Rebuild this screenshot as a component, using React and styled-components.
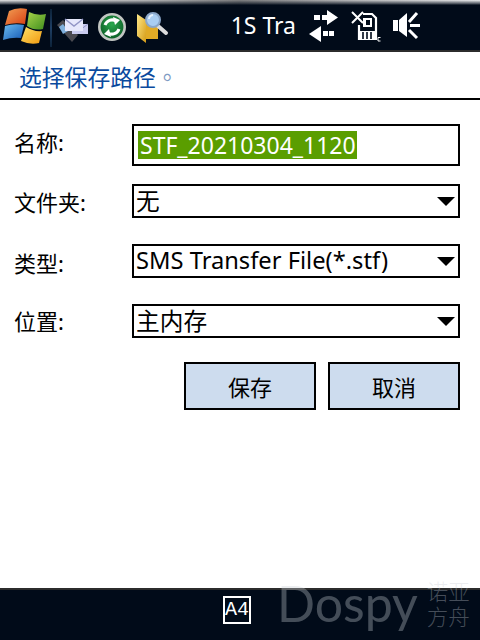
import React from "react";
import styled, { createGlobalStyle } from "styled-components";

const Global = createGlobalStyle`
  html, body { margin: 0; padding: 0; background: #fff; }
  #root { width: 480px; height: 640px; overflow: hidden; }
`;

const Page = styled.div`
  position: relative;
  width: 480px;
  height: 640px;
  display: flex;
  flex-direction: column;
  font-family: "Noto Sans", "Noto Sans CJK SC", sans-serif;
  color: #000;
  overflow: hidden;
`;
const StatusBar = styled.header`
  height: 52px;
  box-sizing: border-box;
  padding-top: 5px;
  border-bottom: 2px solid #2c2c2c;
  background:
    linear-gradient(rgba(1, 11, 25, 0.05) 0, rgba(1, 11, 25, 0.75) 4px, #010b19 5px),
    linear-gradient(90deg, #f4f4f4, #c8c8c8 30%, #8a8a8a 50%, #cfcfcf 75%, #fff);
  display: flex;
  align-items: center;
  flex: none;
`;
const Start = styled.svg`
  width: 50px;
  height: 45px;
  flex: none;
`;
const Divider = styled.div`
  width: 2px;
  height: 38px;
  background: linear-gradient(#0c2238, #1f3f64 50%, #0c2238);
  margin-right: 3px;
  flex: none;
`;
const TrayIcon = styled.svg`
  width: ${p => p.$w}px;
  height: 45px;
  flex: none;
  margin-left: ${p => p.$gap || 0}px;
`;
const Ticker = styled.div`
  width: 66px;
  margin-left: ${p => p.$gap}px;
  white-space: nowrap;
  text-align: right;
  color: #fff;
  font: 23px/1 "Noto Sans", sans-serif;
  flex: none;
  position: relative;
  top: -2px;
`;
const TitleBar = styled.div`
  height: 48px;
  box-sizing: border-box;
  border-bottom: 2px solid #000;
  padding: 7px 0 0 19px;
  font-size: 22.8px;
  line-height: 36px;
  color: #0a4a9e;
  flex: none;
  white-space: nowrap;
`;
const FullStop = styled.span`
  font-family: "Noto Sans CJK TC", sans-serif;
  color: #7f9cc4;
`;
const Content = styled.main`
  flex: 1;
  padding: 24px 20px 0 14px;
  display: grid;
  grid-template-columns: 118px 328px;
  grid-auto-rows: 60px;
  align-content: start;
`;
const Label = styled.label`
  font-size: 22px;
  line-height: 30px;
  padding-top: ${p => p.$top}px;
  white-space: nowrap;
`;
const Field = styled.div`
  box-sizing: border-box;
  height: ${p => p.$h}px;
  border: 2px solid #000;
  display: flex;
  align-items: center;
  justify-content: space-between;
  padding: 0 3px 0 2px;
  font-family: "Noto Sans", "Noto Sans CJK SC", sans-serif;
  font-size: 23.7px;
  white-space: nowrap;
`;
const FieldText = styled.span`
  position: relative;
  top: -1px;
`;
const Selected = styled.span`
  background: #5a9e00;
  color: #fff;
  font-size: 23px;
  height: 28px;
  line-height: 28px;
  padding: 0 1px 0 2px;
  margin-left: 2px;
`;
const Arrow = styled.span`
  width: 0;
  height: 0;
  border-left: 9px solid transparent;
  border-right: 9px solid transparent;
  border-top: 9px solid #000;
  flex: none;
`;
const Actions = styled.div`
  grid-column: 1 / -1;
  margin-top: -2px;
  display: flex;
  justify-content: flex-end;
  gap: 12px;
`;
const Action = styled.button`
  width: 132px;
  height: 48px;
  box-sizing: border-box;
  border: 2px solid #000;
  background: #cddcee;
  color: #000;
  font-family: "Noto Sans CJK SC", sans-serif;
  font-size: 22px;
  padding: 0;
`;
const BottomBar = styled.footer`
  height: 52px;
  box-sizing: border-box;
  border-top: 2px solid #2c2c2c;
  background: #010b19;
  display: flex;
  padding: 6px 0 0 223px;
  flex: none;
`;
const KeyboardKey = styled.div`
  width: 28px;
  height: 28px;
  box-sizing: border-box;
  border: 2px solid #fff;
  color: #fff;
  font: 20px/24px "Liberation Mono", monospace;
  text-align: center;
`;
const Watermark = styled.div`
  position: absolute;
  left: 277px;
  top: 573px;
  display: flex;
  gap: 9px;
  pointer-events: none;
  color: rgba(200, 205, 212, 0.34);
`;
const Brand = styled.div`
  font: 400 50px/60px Lato, sans-serif;
`;
const BrandCn = styled.div`
  font-family: "Noto Sans CJK SC", sans-serif;
  font-weight: 300;
  font-size: 21.5px;
  line-height: 25px;
  padding-top: 5px;
  width: 44px;
`;

const WinLogo = () => (
  <Start viewBox="0 5 50 45">
    <defs>
      <linearGradient id="wr" x1="0" y1="0" x2="1" y2="1"><stop offset="0" stopColor="#f2a055" /><stop offset="1" stopColor="#d83e12" /></linearGradient>
      <linearGradient id="wg" x1="0" y1="0" x2="1" y2="1"><stop offset="0" stopColor="#a8d34a" /><stop offset="1" stopColor="#3f8f1e" /></linearGradient>
      <linearGradient id="wb" x1="0" y1="0" x2="1" y2="1"><stop offset="0" stopColor="#6bbcf0" /><stop offset="1" stopColor="#1458b4" /></linearGradient>
      <linearGradient id="wy" x1="0" y1="0" x2="1" y2="1"><stop offset="0" stopColor="#ffe268" /><stop offset="1" stopColor="#f09a10" /></linearGradient>
    </defs>
    <path d="M9 11 Q17 7 27 9 L25 24 Q15 22 5 25 Z" fill="url(#wr)" />
    <path d="M29 12 Q37 16 46 14 L43 29 Q34 31 27 26 Z" fill="url(#wg)" />
    <path d="M5 26 Q14 23 24 25 L21 38 Q12 37 3 40 Z" fill="url(#wb)" />
    <path d="M26 27 Q34 32 42 31 L39 43 Q30 45 21 41 Z" fill="url(#wy)" />
  </Start>
);

const MailIcon = () => (
  <TrayIcon $w={34} viewBox="55 5 34 45">
    <path d="M57 25 L63 20 L78 35 L72 42 Z" fill="#4a4a50" />
    <path d="M59 27 L63 24 L68 31 L63 34 Z" fill="#7fb0dc" />
    <rect x="72" y="24" width="16" height="10" fill="#c9cbee" />
    <path d="M72 24 L80 30 L88 24" fill="none" stroke="#8f93c4" />
    <rect x="65" y="19" width="18" height="12" fill="#e6e8fb" />
    <path d="M65 19 L74 26 L83 19" fill="none" stroke="#9296c6" strokeWidth="1.4" />
  </TrayIcon>
);

const SyncIcon = () => (
  <TrayIcon $w={31} $gap={8} viewBox="97 5 31 45">
    <defs>
      <radialGradient id="sg" cx="0.5" cy="0.4" r="0.6"><stop offset="0" stopColor="#2aa84e" /><stop offset="1" stopColor="#0a5a24" /></radialGradient>
    </defs>
    <circle cx="112" cy="27" r="12.7" fill="url(#sg)" stroke="#c2c6c2" strokeWidth="2.6" />
    <path d="M105 25 A7.5 7.5 0 0 1 116 21" fill="none" stroke="#fff" strokeWidth="3" />
    <path d="M113 17 L120 20 L115 25 Z" fill="#fff" />
    <path d="M119 29 A7.5 7.5 0 0 1 108 33" fill="none" stroke="#fff" strokeWidth="3" />
    <path d="M111 37 L104 34 L109 29 Z" fill="#fff" />
  </TrayIcon>
);

const FolderIcon = () => (
  <TrayIcon $w={35} $gap={6} viewBox="134 5 35 45">
    <defs>
      <linearGradient id="fg" x1="0" y1="0" x2="1" y2="1"><stop offset="0" stopColor="#ffe98a" /><stop offset="1" stopColor="#d49a14" /></linearGradient>
    </defs>
    <path d="M146 18 H158 V39 H146 Z" fill="#e0aa26" />
    <path d="M137 14 L146 20 V43 L137 36 Z" fill="url(#fg)" />
    <path d="M158 26 L166 33" stroke="#dcdcdc" strokeWidth="4" strokeLinecap="round" />
    <circle cx="153" cy="20" r="7" fill="#a9cdf2" stroke="#8aa6c8" strokeWidth="2" />
    <path d="M149 19 A4.5 4.5 0 0 1 153 15" fill="none" stroke="#e6f2fd" strokeWidth="2" />
  </TrayIcon>
);

const TransferIcon = () => (
  <TrayIcon $w={32} $gap={12} viewBox="308 5 32 45">
    <path fill="#fff" d="M327 10 L338 17.5 L327 25 Z M314 15 H320 V20 H314 Z M322 15 H327 V20 H322 Z" />
    <path fill="#fff" d="M321 26 L309 34 L321 42 Z M323 31 H328 V36 H323 Z M329 31 H334 V36 H329 Z" />
  </TrayIcon>
);

const CardIcon = () => (
  <TrayIcon $w={32} $gap={11} viewBox="351 5 32 45">
    <path d="M363 14 H372 L376 18 V39 H359 V25" fill="none" stroke="#fff" strokeWidth="2.2" />
    <path d="M363 18 H372 V27 H363 Z" fill="#fff" />
    <path d="M366 20 H370 V25 H366 Z" fill="#010b19" />
    <path d="M360 31 H375 V39 H360 Z" fill="#fff" />
    <path d="M363 32 V39 M367 32 V39 M371 32 V39" stroke="#010b19" strokeWidth="1.6" />
    <path d="M352 12 L363 23 M363 12 L352 23" stroke="#fff" strokeWidth="2" />
    <path d="M380.5 37.5 H378 V41 H380.5" fill="none" stroke="#fff" />
  </TrayIcon>
);

const SpeakerIcon = () => (
  <TrayIcon $w={30} $gap={8} viewBox="391 5 30 45">
    <path fill="#fff" d="M393 20 H398 V31 H393 Z M399 20 L407 13 V37 L399 31 Z" />
    <path d="M410 25.5 H420 M409 22 L417 13 M409 30 L417 38" stroke="#fff" strokeWidth="3" fill="none" />
  </TrayIcon>
);

export default function App() {
  return (
    <Page>
      <Global />
      <StatusBar>
        <WinLogo />
        <Divider />
        <MailIcon />
        <SyncIcon />
        <FolderIcon />
        <Ticker $gap={61}>1S Tra</Ticker>
        <TransferIcon />
        <CardIcon />
        <SpeakerIcon />
      </StatusBar>
      <TitleBar>选择保存路径<FullStop>。</FullStop></TitleBar>
      <Content>
        <Label $top={3}>名称:</Label>
        <Field $h={42}><Selected>STF_20210304_1120</Selected></Field>
        <Label $top={3}>文件夹:</Label>
        <Field $h={34}><FieldText>无</FieldText><Arrow /></Field>
        <Label $top={4}>类型:</Label>
        <Field $h={34}><FieldText>SMS Transfer File(*.stf)</FieldText><Arrow /></Field>
        <Label $top={2}>位置:</Label>
        <Field $h={34}><FieldText>主内存</FieldText><Arrow /></Field>
        <Actions>
          <Action>保存</Action>
          <Action>取消</Action>
        </Actions>
      </Content>
      <BottomBar>
        <KeyboardKey>A4</KeyboardKey>
      </BottomBar>
      <Watermark>
        <Brand>Dospy</Brand>
        <BrandCn>诺亚方舟</BrandCn>
      </Watermark>
    </Page>
  );
}
